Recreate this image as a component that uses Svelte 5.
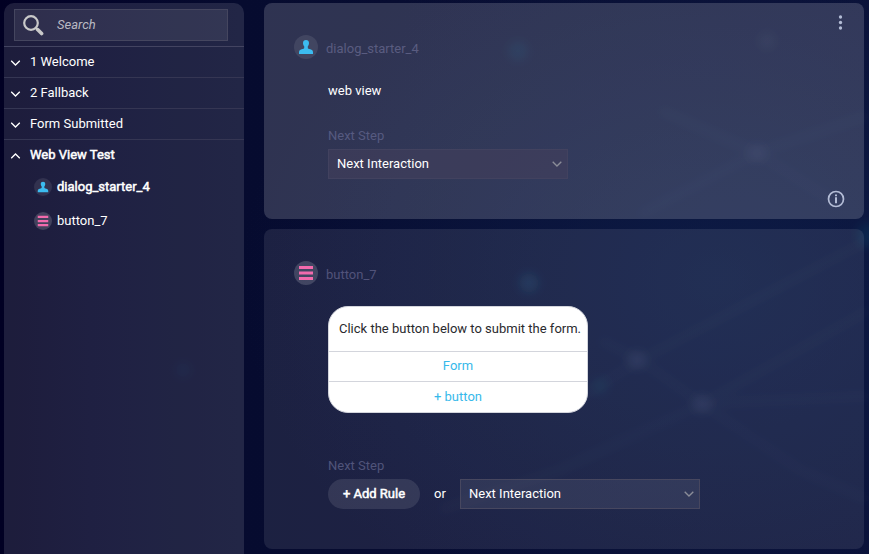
<script>
  const groups = ['1 Welcome', '2 Fallback', 'Form Submitted'];
</script>

{#snippet chevron(up)}
  <svg class="chev" width="10" height="6" viewBox="0 0 10 6" fill="none" stroke="currentColor" stroke-width="1.35">
    <path d={up ? 'M0.7 5.3 L5 1 L9.3 5.3' : 'M0.7 0.7 L5 5 L9.3 0.7'} />
  </svg>
{/snippet}

{#snippet badge(kind)}
  <svg class="badge" viewBox="0 0 24 24">
    <circle cx="12" cy="12" r="12" fill="#fff" fill-opacity={kind === 'user' ? 0.09 : 0.16} />
    {#if kind === 'user'}
      <path fill="#3cbcf0" d="M12 5c1.900 0 3 1.100 3 2.900 0 1.600-.6 2.600-1.200 3.300v1.900c0 .6 1.100 .8 2.500 1.200 1.800.5 2.700 1.300 2.700 3V19H5v-1.700c0-1.700.9-2.500 2.700-3 1.400-.4 2.500-.6 2.500-1.200v-1.900C9.600 10.500 9 9.500 9 7.900 9 6.100 10.100 5 12 5z" />
    {:else}
      <path fill="#f26aad" d="M5 5h14v3H5zM5 10.500h14v3H5zM5 16h14v3H5z" />
    {/if}
  </svg>
{/snippet}

<div class="app">
  <svg class="net" viewBox="0 0 869 554" aria-hidden="true">
    <defs>
      <filter id="soft" x="-20%" y="-20%" width="140%" height="140%"><feGaussianBlur stdDeviation="5" /></filter>
    </defs>
    <g filter="url(#soft)" stroke="#7f97c8" stroke-opacity=".03" stroke-width="7" fill="none">
      <path d="M600 340L640 360L869 240M640 360L702 404L869 310M702 404L869 396M702 404L800 470L869 500M702 404L560 470L440 510M640 360L560 410M660 110L757 153L840 205M757 153L869 115M757 153L640 215" />
    </g>
    <g filter="url(#soft)">
      <circle cx="637" cy="360" r="9" fill="#8e93c0" fill-opacity=".1" />
      <circle cx="702" cy="404" r="9" fill="#8e93c0" fill-opacity=".1" />
      <circle cx="757" cy="153" r="9" fill="#8e93c0" fill-opacity=".07" />
      <circle cx="767" cy="41" r="8" fill="#8e93c0" fill-opacity=".06" />
      <circle cx="518" cy="51" r="10" fill="#2290b0" fill-opacity=".09" />
      <circle cx="529" cy="283" r="10" fill="#2290b0" fill-opacity=".14" />
      <circle cx="600" cy="386" r="9" fill="#2290b0" fill-opacity=".07" />
      <circle cx="869" cy="235" r="12" fill="#2290b0" fill-opacity=".1" />
      <circle cx="183" cy="370" r="8" fill="#2290b0" fill-opacity=".05" />
    </g>
  </svg>

  <aside>
    <div class="searchbar">
      <label class="search">
        <svg width="21" height="21" viewBox="0 0 21 21" fill="none" stroke="#c9c9c9">
          <circle cx="8" cy="8" r="6.800" stroke-width="2.200" />
          <path d="M13 13l1.500 1.500" stroke-width="2.400" />
          <path d="M14.600 14.600l4 4" stroke-width="3.600" stroke-linecap="round" />
        </svg>
        <span>Search</span>
      </label>
    </div>
    {#each groups as g}
      <div class="row">{@render chevron(false)}<span>{g}</span></div>
    {/each}
    <div class="row open">{@render chevron(true)}<span class="bold">Web View Test</span></div>
    <div class="item">{@render badge('user')}<span class="bold">dialog_starter_4</span></div>
    <div class="item">{@render badge('list')}<span>button_7</span></div>
  </aside>

  <main>
    <section class="card active">
      <header>{@render badge('user')}<span>dialog_starter_4</span></header>
      <svg class="dots" width="5" height="16" viewBox="0 0 5 16" fill="#b4bdd6">
        <circle cx="2.500" cy="2" r="1.650" /><circle cx="2.500" cy="7.500" r="1.650" /><circle cx="2.500" cy="13" r="1.650" />
      </svg>
      <p class="message">web view</p>
      <div class="label">Next Step</div>
      <div class="select">Next Interaction {@render chevron(false)}</div>
      <svg class="info" width="18" height="18" viewBox="0 0 18 18">
        <circle cx="9" cy="9" r="7.500" fill="none" stroke="#b4bdd6" stroke-width="1.700" />
        <path d="M8 4.500h2v1.800H8zM8 7.200h2v6H8z" fill="#b4bdd6" />
      </svg>
    </section>

    <section class="card second">
      <header>{@render badge('list')}<span>button_7</span></header>
      <div class="bubble">
        <p>Click the button below to submit the form.</p>
        <div class="action">Form</div>
        <div class="action">+ button</div>
      </div>
      <div class="label">Next Step</div>
      <div class="rules">
        <div class="add"><span class="bold">+ Add Rule</span></div>
        <span class="or">or</span>
        <div class="select">Next Interaction {@render chevron(false)}</div>
      </div>
    </section>
  </main>
</div>

<style>
  :global(body) { background: #020125; }
  .app {
    position: relative;
    box-sizing: border-box;
    width: 869px;
    height: 554px;
    overflow: hidden;
    display: flex;
    gap: 20px;
    padding: 3px 5px 0 4px;
    color: #fff;
    font: 13px/16px Roboto, sans-serif;
    background:
      radial-gradient(ellipse 480px 380px at 720px 280px, rgba(18, 44, 90, 0.42), rgba(18, 44, 90, 0)),
      linear-gradient(90deg, #010023 0, #03042a 90px, #060b2f 240px, #070c31 400px, #0a1037 869px);
  }
  .app * { box-sizing: border-box; }
  .net { position: absolute; inset: 0; width: 869px; height: 554px; }
  .bold { -webkit-text-stroke: 0.5px #fff; }

  aside {
    position: relative;
    width: 240px;
    height: 551px;
    border-radius: 10px 10px 0 0;
    background: rgba(255, 255, 255, 0.115);
  }
  .searchbar { height: 44px; padding: 6px 16px 0 10px; border-bottom: 1px solid #434461; }
  .search {
    display: flex;
    align-items: center;
    height: 32px;
    padding-left: 8px;
    gap: 13px;
    border: 1px solid #45465f;
    background: rgba(255, 255, 255, 0.08);
    color: #b9b9c2;
    font-style: italic;
  }
  .row {
    display: flex;
    align-items: center;
    height: 31px;
    padding-left: 6px;
    gap: 10px;
    border-bottom: 1px solid #353653;
  }
  .row .chev { transform: translate(0.5px, 1px); }
  .open { border: 0; height: 30px; }
  .item { display: flex; align-items: center; height: 34px; padding-left: 30px; gap: 5px; }
  .item .badge { width: 18px; height: 18px; }

  main { position: relative; width: 600px; display: flex; flex-direction: column; gap: 10px; }
  .card { position: relative; border-radius: 8px; padding: 32px 30px 0 64px; }
  .active { height: 216px; background: rgba(255, 255, 255, 0.165); }
  .second { height: 320px; background: rgba(255, 255, 255, 0.09); }
  header {
    display: flex;
    align-items: center;
    gap: 8px;
    height: 24px;
    margin-left: -34px;
    color: #5a5c80;
  }
  header span { padding-top: 3px; }
  header .badge { width: 24px; height: 24px; }
  .second header { color: #51537a; }
  .dots { position: absolute; right: 21px; top: 12px; }
  .info { position: absolute; right: 19px; bottom: 11px; }
  p { margin: 0; }
  .message { margin-top: 24px; }
  .label { margin-top: 29px; margin-bottom: 5px; color: #565a80; }
  .select {
    display: flex;
    align-items: center;
    justify-content: space-between;
    width: 240px;
    height: 30px;
    padding: 0 5px 0 8px;
    border: 1px solid #42425f;
    background: rgba(66, 64, 92, 0.6);
  }
  .second .select { background: rgba(255, 255, 255, 0.08); border-color: #47475f; }
  .select .chev { color: #8b8d98; }
  .bubble {
    width: 260px;
    height: 107px;
    margin-top: 21px;
    border: 1px solid #d3d5dc;
    border-radius: 20px;
    background: #fff;
    color: #2a2a2e;
    overflow: hidden;
  }
  .bubble p { height: 44px; padding: 14px 0 0 10px; white-space: nowrap; }
  .action {
    height: 30px;
    padding-top: 6px;
    border-top: 1px solid #d3d5dc;
    color: #37b9ea;
    text-align: center;
  }
  .action + .action { height: 31px; padding-top: 7px; }
  .second .label { margin-top: 45px; color: #50547a; }
  .rules { display: flex; align-items: center; }
  .add {
    display: flex;
    align-items: center;
    justify-content: center;
    width: 92px;
    height: 30px;
    border-radius: 15px;
    background: rgba(255, 255, 255, 0.1);
  }
  .or { width: 40px; text-align: center; }
</style>
